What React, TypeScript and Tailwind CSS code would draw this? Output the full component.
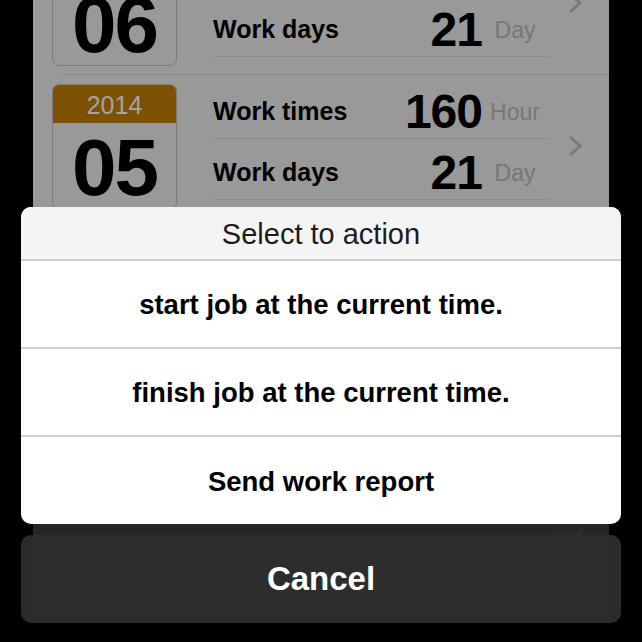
import React from "react";

type Month = {
  year: string;
  month: string;
  hours: string;
  days: string;
};

// only the rows that show above the action sheet
const months: Month[] = [
  { year: "2014", month: "06", hours: "160", days: "21" },
  { year: "2014", month: "05", hours: "160", days: "21" },
];

const actions = [
  "start job at the current time.",
  "finish job at the current time.",
  "Send work report",
];

function Chevron() {
  return (
    <svg width="14" height="22" viewBox="0 0 14 22" className="ml-[19px] shrink-0">
      <polyline points="2,2 12,11 2,20" fill="none" stroke="#797979" strokeWidth="3" />
    </svg>
  );
}

function CalendarBox({ year, month }: { year: string; month: string }) {
  return (
    <div className="mt-[9px] ml-[19px] flex h-[125px] w-[125px] shrink-0 flex-col overflow-hidden rounded-[7px] border border-[#7b7b7b]">
      <div className="flex h-[38px] items-center justify-center bg-[#7d5205] pt-[3px] text-[25px] leading-none text-[#a4a4a4]">
        {year}
      </div>
      <div className="flex flex-1 items-center justify-center pt-[5px] text-[80px] font-bold leading-none tracking-[-2px] text-black">
        {month}
      </div>
    </div>
  );
}

function StatLine({ label, value, unit, tall }: { label: string; value: string; unit: string; tall?: boolean }) {
  return (
    <div
      className={
        tall
          ? "flex h-[64px] items-center border-b border-[#8b8b8b] pt-[11px]"
          : "flex h-[61px] items-center border-b border-[#8b8b8b] pt-[8px]"
      }
    >
      <span className="flex-1 text-[25px] font-bold text-black">{label}</span>
      <span className="text-[48px] font-bold leading-none tracking-[-1px] text-black">{value}</span>
      <span className="mr-[6px] ml-[5px] w-[56px] text-center text-[23px] text-[#777]">{unit}</span>
    </div>
  );
}

function MonthRow({ m }: { m: Month }) {
  return (
    <div className="flex h-[143px] shrink-0 flex-col">
      <div className="flex h-[142px] items-start">
        <CalendarBox year={m.year} month={m.month} />
        <div className="ml-[36px] w-[336px]">
          <StatLine label="Work times" value={m.hours} unit="Hour" tall />
          <StatLine label="Work days" value={m.days} unit="Day" />
        </div>
        <div className="flex h-full items-center">
          <Chevron />
        </div>
      </div>
      <div className="ml-[27px] h-px bg-[#8a8a8a]" />
    </div>
  );
}

export default function App() {
  return (
    <div
      className="relative h-[642px] w-[642px] overflow-hidden bg-black"
      style={{ fontFamily: '"Liberation Sans", Arial, sans-serif' }}
    >
      <div className="flex h-full">
        <div className="w-[33px] shrink-0" />
        <div className="flex w-[576px] shrink-0 flex-col">
          <div className="h-[524px] overflow-hidden bg-[#999999]">
            <div className="-mt-[68px] flex flex-col">
              {months.map((m) => (
                <MonthRow key={m.month} m={m} />
              ))}
            </div>
          </div>
          <div className="relative h-[99px] bg-[#262626]">
            {/* compose icon in the toolbar, seen through the cancel button */}
            <svg width="44" height="44" viewBox="0 0 44 44" className="absolute left-[512px] top-[1px] opacity-40">
              <path d="M30 8 H4 V42 H32 V18" fill="none" stroke="#1f3550" strokeWidth="2" />
              <path d="M16 28 L38 4" fill="none" stroke="#24406a" strokeWidth="3" />
            </svg>
          </div>
        </div>
      </div>

      <div className="absolute left-[21px] top-[207px] w-[600px] overflow-hidden rounded-[10px] bg-white">
        <div className="flex h-[52px] items-center justify-center bg-[#f4f4f4] pt-[4px] text-[29px] text-[#1c1c1c]">
          Select to action
        </div>
        {actions.map((a, i) => (
          <div
            key={a}
            className={
              i === 2
                ? "flex h-[89px] items-center justify-center border-t-2 border-[#cfcfcf] pt-[2px] text-[27.5px] font-bold text-black"
                : "flex h-[88px] items-center justify-center border-t-2 border-[#cfcfcf] pt-[2px] text-[27.5px] font-bold text-black"
            }
          >
            {a}
          </div>
        ))}
      </div>

      <div className="absolute left-[21px] top-[535px] flex h-[88px] w-[600px] items-center justify-center rounded-[10px] bg-[#2d2d2d]/95 text-[33px] font-bold text-white">
        Cancel
      </div>
    </div>
  );
}
